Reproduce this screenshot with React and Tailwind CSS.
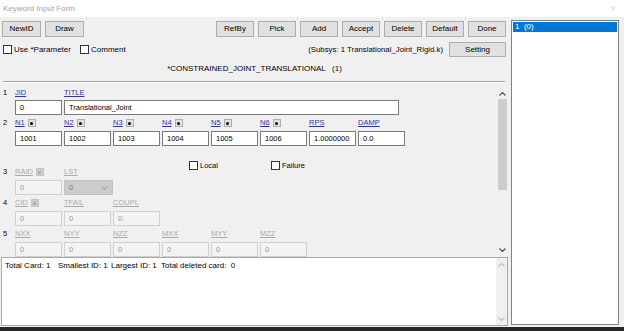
import React from "react";

function Btn({ children, w = "w-[38px]" }) {
  return (
    <div className={`${w} h-full bg-[#e1e1e1] border border-[#adadad] flex items-center justify-center text-[8px] text-black`}>
      {children}
    </div>
  );
}

function Check({ size = "w-[9px] h-[9px]" }) {
  return <div className={`${size} border border-[#333333] bg-white shrink-0`} />;
}

function DotBtn({ disabled }) {
  return (
    <span
      className={
        disabled
          ? "ml-[3px] w-[8px] h-[8px] bg-[#cccccc] border border-[#c4c4c4] flex items-center justify-center"
          : "ml-[3px] w-[8px] h-[8px] bg-[#e1e1e1] border border-[#adadad] flex items-center justify-center"
      }
    >
      <span className={disabled ? "w-[3px] h-[3px] rounded-full bg-[#a8a8a8]" : "w-[3px] h-[3px] rounded-full bg-black"} />
    </span>
  );
}

function Lbl({ text, dot, disabled }) {
  return (
    <div className="w-[49px] flex items-center">
      <span className={disabled ? "text-[#aaaaaa] underline text-[7.5px] leading-none" : "text-[#3333a0] underline text-[7.5px] leading-none"}>
        {text}
      </span>
      {dot && <DotBtn disabled={disabled} />}
    </div>
  );
}

function Inp({ v, w = "w-[47px]", disabled }) {
  return (
    <div
      className={
        disabled
          ? `${w} h-full border border-[#d0d0d0] bg-[#f3f3f3] text-[#999999] text-[7.5px] pl-[4px] flex items-center`
          : `${w} h-full border border-[#7a7a7a] bg-white text-black text-[7.5px] pl-[4px] flex items-center`
      }
    >
      {v}
    </div>
  );
}

function Num({ n }) {
  return <span className="w-[15px] pl-[3px] text-[7.5px] text-black leading-none">{n}</span>;
}

function Chev({ up, color = "#5a5a5a" }) {
  return (
    <svg width="7" height="4" viewBox="0 0 7 4">
      <polyline
        points={up ? "0.5,3.5 3.5,0.5 6.5,3.5" : "0.5,0.5 3.5,3.5 6.5,0.5"}
        fill="none"
        stroke={color}
        strokeWidth="1.2"
      />
    </svg>
  );
}

export default function App() {
  return (
    <div className="w-[624px] h-[331px] bg-[#f0f0f0] flex flex-col overflow-hidden font-['Liberation_Sans',Arial,sans-serif] text-black">
      {/* Title bar */}
      <div className="h-[17px] bg-white flex items-center justify-between pl-[3px] pr-[8px]">
        <span className="text-[8px] text-[#a3a3a3]">Keyword Input Form</span>
        <span className="text-[10px] text-[#d6d6d6] leading-none">×</span>
      </div>

      {/* Body */}
      <div className="h-[310px] flex">
        {/* Left */}
        <div className="w-[509px] flex flex-col">
          {/* Buttons */}
          <div className="mt-[4px] h-[16px] flex pl-[2px] pr-[3px] gap-[4px]">
            <Btn w="w-[39px]">NewID</Btn>
            <Btn w="w-[39px]">Draw</Btn>
            <div className="flex-1" />
            <Btn>RefBy</Btn>
            <Btn>Pick</Btn>
            <Btn>Add</Btn>
            <Btn>Accept</Btn>
            <Btn>Delete</Btn>
            <Btn>Default</Btn>
            <Btn>Done</Btn>
          </div>

          {/* Options row */}
          <div className="mt-[5px] h-[15px] flex items-center pl-[3px] pr-[3px]">
            <Check />
            <span className="ml-[2px] w-[66px] text-[8px]">Use *Parameter</span>
            <Check />
            <span className="ml-[2px] text-[8px]">Comment</span>
            <div className="flex-1" />
            <span className="text-[7.8px]">(Subsys: 1 Translational_Joint_Rigid.k)</span>
            <div className="ml-[6px] w-[57px] h-full">
              <Btn w="w-[57px]">Setting</Btn>
            </div>
          </div>

          {/* Header */}
          <div className="h-[23px] flex items-center justify-center text-[8px] whitespace-pre">
            *CONSTRAINED_JOINT_TRANSLATIONAL   (1)
          </div>

          {/* Separator */}
          <div className="mt-[1px] mx-[3px] mr-[4px] border-t border-[#a0a0a0] border-b border-b-white" />

          {/* Scroll area */}
          <div className="h-[174px] flex">
            <div className="flex-1 pt-[3px] flex flex-col overflow-hidden">
              {/* Row 1 */}
              <div className="h-[16px] flex items-center">
                <Num n="1" />
                <Lbl text="JID" />
                <Lbl text="TITLE" />
              </div>
              <div className="h-[15px] flex gap-[2px] pl-[15px] shrink-0">
                <Inp v="0" />
                <Inp v="Translational_Joint" w="w-[335px]" />
              </div>

              {/* Row 2 */}
              <div className="h-[16px] flex items-center shrink-0">
                <Num n="2" />
                <Lbl text="N1" dot />
                <Lbl text="N2" dot />
                <Lbl text="N3" dot />
                <Lbl text="N4" dot />
                <Lbl text="N5" dot />
                <Lbl text="N6" dot />
                <Lbl text="RPS" />
                <Lbl text="DAMP" />
              </div>
              <div className="h-[15px] flex gap-[2px] pl-[15px] shrink-0">
                <Inp v="1001" />
                <Inp v="1002" />
                <Inp v="1003" />
                <Inp v="1004" />
                <Inp v="1005" />
                <Inp v="1006" />
                <Inp v="1.0000000" />
                <Inp v="0.0" />
              </div>

              {/* Local / Failure */}
              <div className="h-[18px] shrink-0 flex items-start pt-[15px] pl-[189px]">
                <div className="flex items-center h-[9px]">
                  <Check />
                  <span className="ml-[2px] w-[71px] text-[7.5px]">Local</span>
                  <Check />
                  <span className="ml-[2px] text-[7.5px]">Failure</span>
                </div>
              </div>

              {/* Row 3 */}
              <div className="h-[16px] flex items-center shrink-0">
                <Num n="3" />
                <Lbl text="RAID" dot disabled />
                <Lbl text="LST" disabled />
              </div>
              <div className="h-[15px] flex gap-[2px] pl-[15px] shrink-0">
                <Inp v="0" disabled />
                <div className="w-[49px] h-full bg-[#cccccc] border border-[#c2c2c2] flex items-center justify-between pl-[4px] pr-[4px] text-[7.5px] text-[#7f7f7f]">
                  <span>0</span>
                  <Chev color="#a8a8a8" />
                </div>
              </div>

              {/* Row 4 */}
              <div className="h-[16px] flex items-center shrink-0">
                <Num n="4" />
                <Lbl text="CID" dot disabled />
                <Lbl text="TFAIL" disabled />
                <Lbl text="COUPL" disabled />
              </div>
              <div className="h-[15px] flex gap-[2px] pl-[15px] shrink-0">
                <Inp v="0" disabled />
                <Inp v="0" disabled />
                <Inp v="0." disabled />
              </div>

              {/* Row 5 */}
              <div className="h-[16px] flex items-center shrink-0">
                <Num n="5" />
                <Lbl text="NXX" disabled />
                <Lbl text="NYY" disabled />
                <Lbl text="NZZ" disabled />
                <Lbl text="MXX" disabled />
                <Lbl text="MYY" disabled />
                <Lbl text="MZZ" disabled />
              </div>
              <div className="h-[15px] flex gap-[2px] pl-[15px] shrink-0">
                <Inp v="0" disabled />
                <Inp v="0" disabled />
                <Inp v="0" disabled />
                <Inp v="0" disabled />
                <Inp v="0" disabled />
                <Inp v="0" disabled />
              </div>
            </div>

            {/* Scrollbar */}
            <div className="w-[11px] mr-[1px] flex flex-col items-center">
              <div className="mt-[9px] h-[4px] flex">
                <Chev up color="#505050" />
              </div>
              <div className="mt-[3px] w-[9px] h-[91px] bg-[#cdcdcd]" />
              <div className="flex-1" />
              <div className="h-[4px] mb-[5px] flex">
                <Chev color="#505050" />
              </div>
            </div>
          </div>

          {/* Text area */}
          <div className="ml-[1px] w-[507px] h-[69px] bg-white border border-[#a9a9a9] flex">
            <div className="flex-1 pl-[3px] pt-[3px] flex text-[8px] leading-[10px]">
              <span className="w-[53px]">Total Card: 1</span>
              <span className="w-[53px]">Smallest ID: 1</span>
              <span className="w-[50px]">Largest ID: 1</span>
              <span className="whitespace-pre">Total deleted card:  0</span>
            </div>
            <div className="w-[11px] bg-[#f0f0f0] flex flex-col items-center justify-between pt-[5px] pb-[4px]">
              <Chev up color="#bdbdbd" />
              <Chev color="#bdbdbd" />
            </div>
          </div>
        </div>

        {/* List box */}
        <div className="ml-[2px] mt-[3px] w-[108px] h-[305px] bg-white border border-[#828282] pt-[1px] px-[1px]">
          <div className="h-[10px] bg-[#0078d7] text-white text-[8px] leading-[10px] pl-[2px] whitespace-pre">1  (0)</div>
        </div>
      </div>

      <div className="h-[4px] bg-[#262626]" />
    </div>
  );
}
